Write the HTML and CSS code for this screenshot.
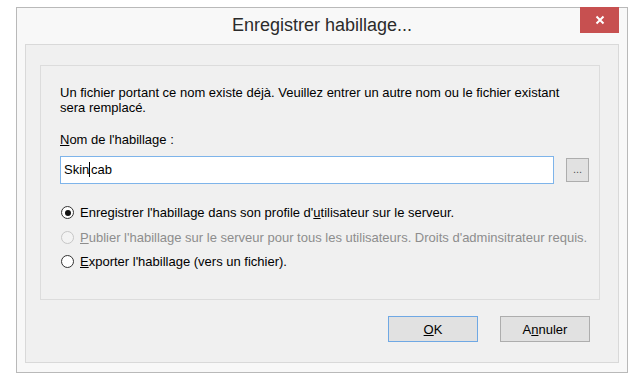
FILE: index.html
```html
<!DOCTYPE html>
<html lang="fr">

<head>
    <meta charset="UTF-8">
    <title>Enregistrer habillage...</title>
    <link rel="stylesheet" href="styles.css">
</head>

<body>
    <div class="window">
        <div class="titlebar">
            <span></span>
            <h1 class="title">Enregistrer habillage...</h1>
            <button class="close" title="Fermer">
                <svg width="10" height="10" viewBox="0 0 10 10">
                    <path d="M1.5 1.5 L8.5 8.5 M8.5 1.5 L1.5 8.5" stroke="#fff" stroke-width="2" fill="none" />
                </svg>
            </button>
        </div>

        <div class="client">
            <div class="group">
                <p class="message">Un fichier portant ce nom existe déjà. Veuillez entrer un autre nom ou le fichier existant<br>sera remplacé.</p>

                <label class="field-label"><u>N</u>om de l'habillage :</label>
                <div class="field-row">
                    <div class="textbox">Skin<span class="caret"></span>.cab</div>
                    <button class="browse">...</button>
                </div>

                <div class="options">
                    <label class="option">
                        <span class="radio checked"></span>
                        <span>Enregistrer l'habillage dans son profile d'<u>u</u>tilisateur sur le serveur.</span>
                    </label>
                    <label class="option disabled">
                        <span class="radio"></span>
                        <span><u>P</u>ublier l'habillage sur le serveur pour tous les utilisateurs. Droits d'adminsitrateur requis.</span>
                    </label>
                    <label class="option">
                        <span class="radio"></span>
                        <span><u>E</u>xporter l'habillage (vers un fichier).</span>
                    </label>
                </div>
            </div>

            <div class="actions">
                <button class="btn default"><u>O</u>K</button>
                <button class="btn">A<u>n</u>nuler</button>
            </div>
        </div>
    </div>
</body>

</html>
```

FILE: styles.css
```css
body {
    margin: 0;
    background: #fff;
    font-family: "Liberation Sans", Arial, sans-serif;
    font-size: 13px;
    color: #000;
}

.window {
    box-sizing: border-box;
    width: 612px;
    height: 366px;
    margin: 7px 0 0 16px;
    border: 1px solid #b9b9b9;
    background: #f8f8f8;
}

.titlebar {
    display: grid;
    grid-template-columns: 1fr auto 1fr;
    height: 36px;
}

.title {
    margin: 0;
    font-size: 18px;
    font-weight: normal;
    line-height: 35px;
    color: #2b2b2b;
    white-space: nowrap;
}

.close {
    justify-self: end;
    display: flex;
    align-items: center;
    justify-content: center;
    width: 39px;
    height: 26px;
    margin: -1px 8px 0 0;
    padding: 0;
    border: none;
    background: #c75050;
}

.client {
    box-sizing: border-box;
    height: 319px;
    margin: 0 8px;
    padding: 20px 18px 0 14px;
    border: 1px solid #d9d9d9;
    background: #f0f0f0;
}

.group {
    box-sizing: border-box;
    height: 235px;
    padding: 19px 10px 0 19px;
    border: 1px solid #dcdcdc;
}

.message {
    margin: 0;
    line-height: 15px;
}

.field-label {
    display: block;
    margin-top: 17px;
    line-height: 15px;
}

.field-row {
    display: flex;
    align-items: center;
    gap: 12px;
    margin-top: 9px;
}

.textbox {
    box-sizing: border-box;
    flex-shrink: 0;
    width: 494px;
    height: 28px;
    padding: 0 3px;
    border: 1px solid #7eb4ea;
    background: #fff;
    line-height: 25px;
}

.caret {
    display: inline-block;
    width: 1px;
    height: 15px;
    margin-right: -3px;
    vertical-align: -3px;
    background: #000;
}

.browse {
    box-sizing: border-box;
    flex-shrink: 0;
    width: 23px;
    height: 24px;
    padding: 0 0 2px;
    border: 1px solid #adadad;
    background: #e1e1e1;
    font-family: inherit;
    font-size: 11px;
    color: #555;
    line-height: 1;
}

.options {
    display: flex;
    flex-direction: column;
    gap: 9.5px;
    margin-top: 21px;
}

.option {
    display: flex;
    align-items: center;
    gap: 6px;
    line-height: 15px;
    white-space: nowrap;
}

.option.disabled {
    color: #8d8d8d;
}

.radio {
    box-sizing: border-box;
    display: grid;
    place-items: center;
    flex-shrink: 0;
    width: 13px;
    height: 13px;
    margin-left: 1px;
    border: 1px solid #333;
    border-radius: 50%;
    background: #fff;
}

.radio.checked::after {
    content: "";
    width: 6px;
    height: 6px;
    border-radius: 50%;
    background: #111;
}

.disabled .radio {
    border-color: #c6c6c6;
    background: #f3f3f3;
}

.actions {
    display: flex;
    justify-content: flex-end;
    gap: 22px;
    margin: 16px 10px 0 0;
}

.btn {
    box-sizing: border-box;
    width: 90px;
    height: 26px;
    padding: 0;
    border: 1px solid #adadad;
    background: #e1e1e1;
    font-family: inherit;
    font-size: 13px;
    color: #000;
}

.btn.default {
    border-color: #6fa8e4;
}
```
